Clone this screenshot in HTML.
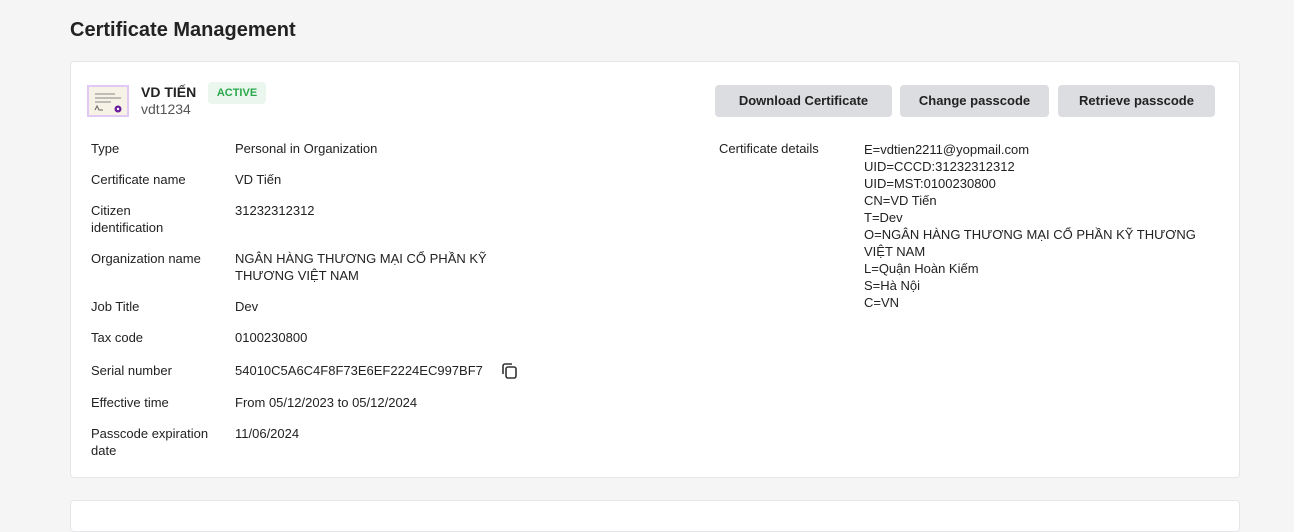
<!DOCTYPE html><html><head><meta charset="utf-8"><style>
body{margin:0;width:1294px;height:507px;background:#f5f5f6;font-family:"Liberation Sans",sans-serif;color:#222;overflow:hidden;position:relative}
.t{position:absolute;left:70px;top:19px;font-size:20px;font-weight:bold;color:#222}
.card{position:absolute;left:70px;top:61px;width:1168px;height:415px;background:#fff;border:1px solid #e6e6e8;border-radius:4px}
.card2{position:absolute;left:70px;top:500px;width:1168px;height:30px;background:#fff;border:1px solid #e6e6e8;border-radius:4px}
.a{position:absolute;font-size:13px;line-height:17px}
.btn{position:absolute;top:85px;height:32px;background:#dcdde0;border-radius:4px;font-size:13px;font-weight:bold;line-height:32px;text-align:center;color:#222}
</style></head><body>
<div class="t">Certificate Management</div>
<div class="card"></div><div class="card2"></div>
<svg style="position:absolute;left:87px;top:85px" width="42" height="32"><rect x="1" y="1" width="40" height="30" fill="#f6f2e6" stroke="#e2c9f5" stroke-width="2"/><path d="M8 9h20M8 13h26M8 17h16" stroke="#888" stroke-width="1"/><path d="M8 25l2-4 2 4h4" stroke="#666" fill="none"/><circle cx="31" cy="24" r="3.5" fill="#6a1b9a"/><circle cx="31" cy="24" r="1.2" fill="#fff"/></svg>
<div class="a" style="left:141px;top:84px;font-size:14px;font-weight:bold">VD TIẾN</div>
<div class="a" style="left:141px;top:101px;font-size:14px;color:#555">vdt1234</div>
<div class="a" style="left:208px;top:82px;width:58px;height:22px;line-height:22px;background:#ebf6ee;color:#2aa84a;font-size:11px;font-weight:bold;text-align:center;border-radius:4px">ACTIVE</div>
<div class="btn" style="left:715px;width:177px">Download Certificate</div>
<div class="btn" style="left:900px;width:149px">Change passcode</div>
<div class="btn" style="left:1058px;width:157px">Retrieve passcode</div>
<div class="a" style="left:91px;top:140px">Type</div><div class="a" style="left:235px;top:140px">Personal in Organization</div>
<div class="a" style="left:91px;top:171px">Certificate name</div><div class="a" style="left:235px;top:171px">VD Tiến</div>
<div class="a" style="left:91px;top:202px">Citizen<br>identification</div><div class="a" style="left:235px;top:202px">31232312312</div>
<div class="a" style="left:91px;top:250px">Organization name</div><div class="a" style="left:235px;top:250px">NGÂN HÀNG THƯƠNG MẠI CỔ PHẦN KỸ<br>THƯƠNG VIỆT NAM</div>
<div class="a" style="left:91px;top:298px">Job Title</div><div class="a" style="left:235px;top:298px">Dev</div>
<div class="a" style="left:91px;top:329px">Tax code</div><div class="a" style="left:235px;top:329px">0100230800</div>
<div class="a" style="left:91px;top:362px">Serial number</div><div class="a" style="left:235px;top:362px">54010C5A6C4F8F73E6EF2224EC997BF7</div>
<svg style="position:absolute;left:500px;top:361px" width="20" height="20" fill="none" stroke="#333" stroke-width="1.6"><rect x="6" y="6" width="10" height="11" rx="2"/><path d="M3 13V5a2 2 0 0 1 2-2h7"/></svg>
<div class="a" style="left:91px;top:394px">Effective time</div><div class="a" style="left:235px;top:394px">From 05/12/2023 to 05/12/2024</div>
<div class="a" style="left:91px;top:425px">Passcode expiration<br>date</div><div class="a" style="left:235px;top:425px">11/06/2024</div>
<div class="a" style="left:719px;top:140px">Certificate details</div>
<div class="a" style="left:864px;top:141px">E=vdtien2211@yopmail.com<br>UID=CCCD:31232312312<br>UID=MST:0100230800<br>CN=VD Tiến<br>T=Dev<br>O=NGÂN HÀNG THƯƠNG MẠI CỔ PHẦN KỸ THƯƠNG<br>VIỆT NAM<br>L=Quận Hoàn Kiếm<br>S=Hà Nội<br>C=VN</div>
</body></html>
